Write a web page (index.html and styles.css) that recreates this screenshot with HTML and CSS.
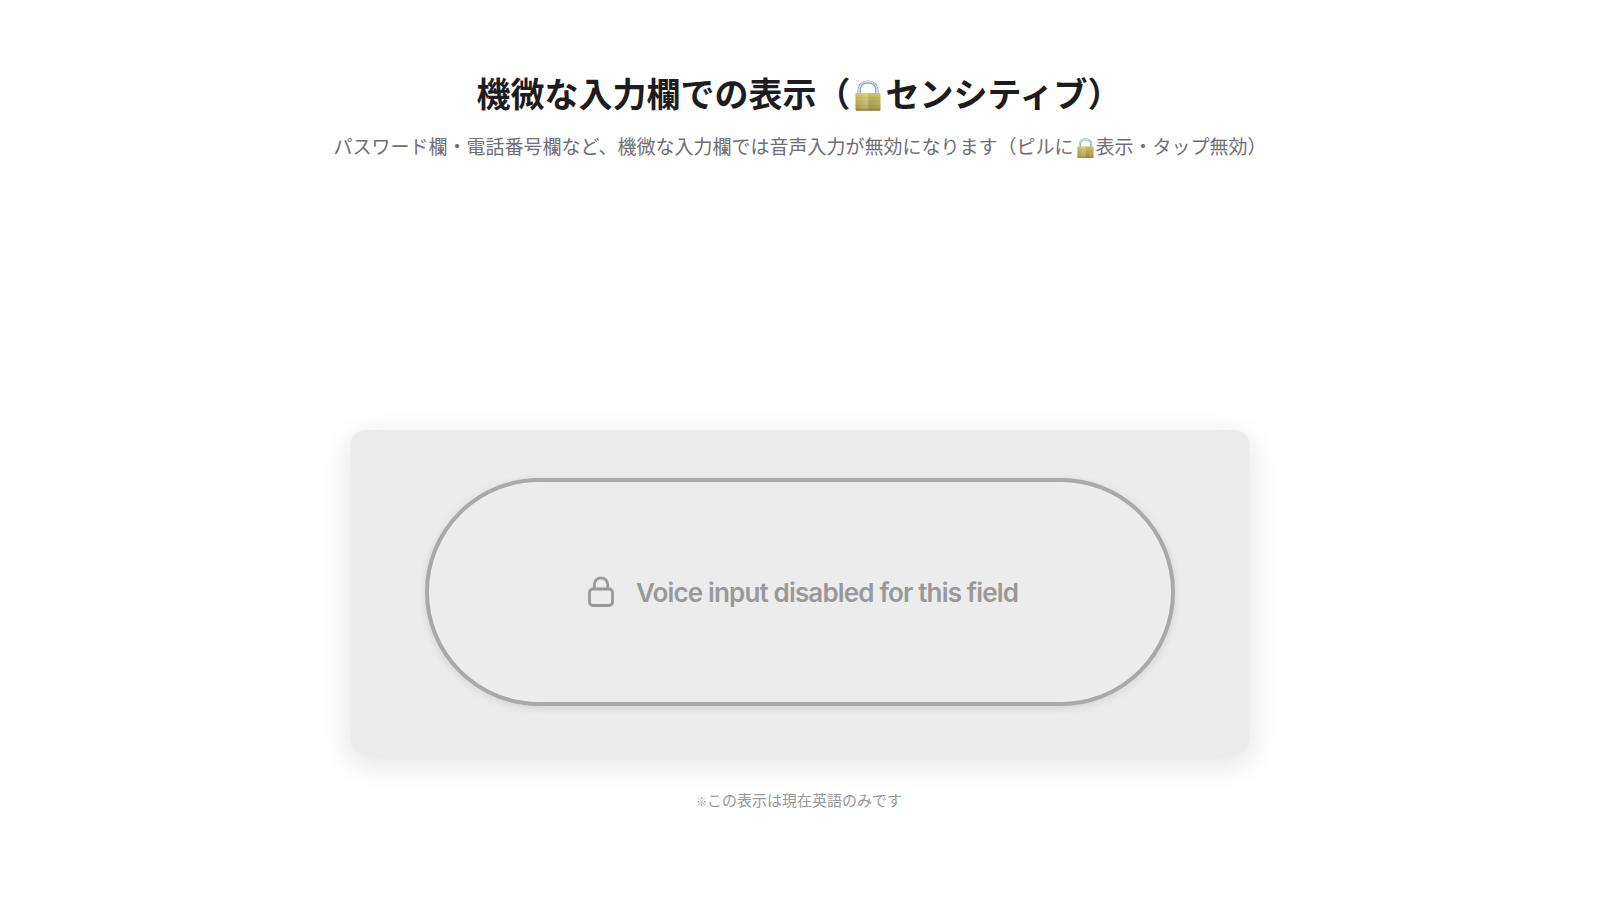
FILE: index.html
```html
<!DOCTYPE html>
<html lang="ja">
  <head>
    <meta charset="UTF-8" />
    <title>機微な入力欄での表示</title>
    <link rel="stylesheet" href="styles.css">
  </head>

  <body>
    <!-- shared padlock -->
    <svg class="defs" width="0" height="0">
      <defs>
        <linearGradient id="brass" x1="0" x2="1" y1="0" y2="0">
          <stop offset="0" stop-color="#b3a04e" />
          <stop offset="0.45" stop-color="#c9bd70" />
          <stop offset="0.55" stop-color="#a89d4c" />
          <stop offset="1" stop-color="#b5ab56" />
        </linearGradient>
        <linearGradient id="shine" x1="0" x2="0" y1="0" y2="1">
          <stop offset="0" stop-color="#fff3a0" stop-opacity="0.4" />
          <stop offset="0.4" stop-color="#fff3a0" stop-opacity="0.12" />
          <stop offset="1" stop-color="#544514" stop-opacity="0.2" />
        </linearGradient>
        <symbol id="padlock" viewBox="0 0 26 31">
          <path d="M4.2 14V11C4.2 5 7.8 2 13 2s8.8 3 8.8 9v3" fill="none" stroke="#8095ab" stroke-width="3.2" />
          <path d="M4 14V11C4 5 7.8 1.7 13 1.7S22 5 22 11v3" fill="none" stroke="#c9e0f5" stroke-width="1.8" />
          <rect x="0.5" y="13" width="25" height="17.5" rx="0.8" fill="url(#brass)" />
          <rect x="0.5" y="13" width="25" height="17.5" rx="0.8" fill="url(#shine)" />
          <path d="M1 17.5h24M1 21.5h24M1 25.5h24" stroke="#8f8232" stroke-width="0.5" opacity="0.25" />
          <path d="M1 30h24" stroke="#806d2c" stroke-width="1" />
        </symbol>
      </defs>
    </svg>

    <h1>機微な入力欄での表示（<svg class="padlock"><use href="#padlock" /></svg>センシティブ）</h1>
    <p class="lead">パスワード欄・電話番号欄など、機微な入力欄では音声入力が無効になります（ピルに<svg class="padlock"><use href="#padlock" /></svg>表示・タップ無効）</p>

    <div class="card">
      <div class="pill">
        <svg class="lock" viewBox="0 0 26 31">
          <rect x="1.5" y="13" width="23" height="16.5" rx="3.5" />
          <path d="M6.3 13V8.5a6.7 6.7 0 0 1 13.4 0V13" />
        </svg>
        <span class="message">Voice input disabled for this field</span>
      </div>
    </div>

    <p class="note"><span class="mark">※</span>この表示は現在英語のみです</p>
  </body>
</html>
```

FILE: styles.css
```css
body {
  margin: 0;
  height: 900px;
  overflow: hidden;
  display: flex;
  flex-direction: column;
  align-items: center;
  background: #fff;
  font-family: "Noto Sans CJK JP", sans-serif;
}

.defs {
  position: absolute;
}

h1,
p {
  margin: 0;
  white-space: nowrap;
}

h1 {
  margin-top: 68px;
  padding-right: 2px;
  font-size: 34px;
  line-height: 50px;
  font-weight: 700;
  color: #1d1d1f;
}

h1 .padlock {
  width: 26px;
  height: 31px;
  margin: 0 5px 0 4px;
  vertical-align: -4px;
}

.lead {
  margin-top: 14px;
  font-size: 19px;
  line-height: 28px;
  color: #6e6e73;
}

.lead .padlock {
  width: 17px;
  height: 20px;
  margin: 0 2px 0 3px;
  vertical-align: -4px;
}

.card {
  box-sizing: border-box;
  display: flex;
  align-items: center;
  justify-content: center;
  width: 900px;
  height: 325px;
  margin-top: 270px;
  padding-bottom: 2px;
  border-radius: 16px;
  background: #ececec;
  box-shadow: 0 8px 30px rgba(0, 0, 0, 0.12);
}

.pill {
  box-sizing: border-box;
  display: flex;
  align-items: center;
  justify-content: center;
  gap: 22px;
  width: 750px;
  height: 228px;
  padding-left: 6px;
  border: 4px solid #a9a9a9;
  border-radius: 114px;
  box-shadow: 0 2px 8px rgba(0, 0, 0, 0.11);
  background: #ececec;
  font-family: Inter, sans-serif;
  font-size: 26px;
  font-weight: 600;
  color: #999;
}

.lock {
  width: 26px;
  height: 31px;
  fill: none;
  stroke: #999;
  stroke-width: 2.8;
}

.message {
  padding-top: 2px;
  letter-spacing: -0.84px;
}

.note {
  margin-top: 34px;
  padding-right: 2px;
  font-size: 15px;
  line-height: 22px;
  color: #98989d;
}

.mark {
  font-size: 11px;
  font-weight: 700;
}
```
